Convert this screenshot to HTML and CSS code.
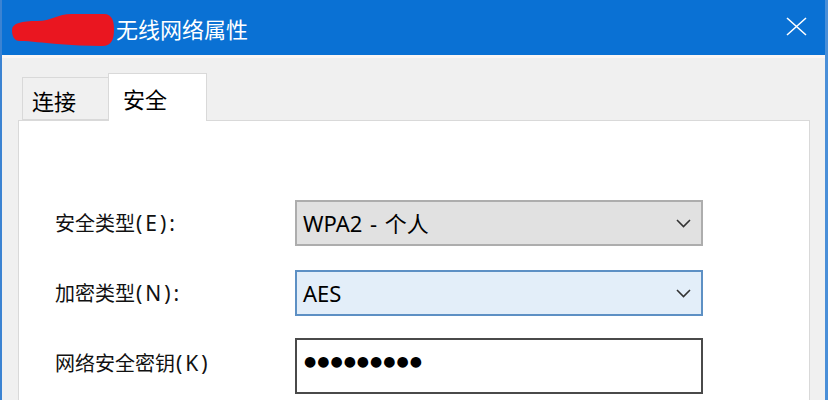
FILE: index.html
```html
<!DOCTYPE html>
<html lang="zh-CN">
<head>
<meta charset="utf-8">
<title>无线网络属性</title>
<link rel="stylesheet" href="styles.css">
</head>
<body>
<div class="window">
  <div class="titlebar">
    <svg class="scribble" width="102" height="36" viewBox="0 0 102 36">
      <path d="M0,19 C0,12 10,10 25,10 C40,10 45,3 60,3 L92,3 C100,3 102,10 102,18 C102,28 100,35 90,35 C75,35 60,34 45,33 C30,32 20,30 8,30 C2,30 0,25 0,19 Z" fill="#ea1620"/>
    </svg>
    <span class="title">无线网络属性</span>
    <svg class="close" width="21" height="19" viewBox="0 0 21 19">
      <path d="M1,1 L20,18 M20,1 L1,18" stroke="#fff" stroke-width="1.6" fill="none"/>
    </svg>
  </div>
  <div class="strip"></div>
  <div class="content">
    <div class="tabs">
      <div class="tab">连接</div>
      <div class="tab active">安全</div>
    </div>
    <div class="panel">
      <div class="row">
        <span class="label">安全类型<span class="lat">(E):</span></span>
        <div class="select">
          <span>WPA2 - 个人</span>
          <svg class="chev" width="15" height="9" viewBox="0 0 15 9"><polyline points="1,1 7.5,7.5 14,1" fill="none" stroke="#333" stroke-width="1.6"/></svg>
        </div>
      </div>
      <div class="row">
        <span class="label">加密类型<span class="lat">(N):</span></span>
        <div class="select focus">
          <span>AES</span>
          <svg class="chev" width="15" height="9" viewBox="0 0 15 9"><polyline points="1,1 7.5,7.5 14,1" fill="none" stroke="#333" stroke-width="1.6"/></svg>
        </div>
      </div>
      <div class="row key">
        <span class="label">网络安全密钥<span class="lat">(K)</span></span>
        <div class="input"><span class="dots">●●●●●●●●●</span></div>
      </div>
    </div>
  </div>
</div>
</body>
</html>
```

FILE: styles.css
```css
* { box-sizing: border-box; }
html, body {
  margin: 0;
  padding: 0;
  width: 828px;
  height: 400px;
  overflow: hidden;
  background: #f0f0f0;
  font-family: "Noto Sans", "Noto Sans CJK SC", sans-serif;
}
.window {
  width: 828px;
  height: 400px;
  border-left: 2px solid #3b83d2;
  border-right: 3px solid #4a8fd8;
  background: #f0f0f0;
  overflow: hidden;
}
.titlebar {
  height: 55px;
  background: #0a71d4;
  display: flex;
  align-items: center;
}
.scribble {
  margin-left: 10px;
  margin-top: 2px;
  flex: none;
}
.title {
  margin-left: 2px;
  color: #fff;
  font-size: 22px;
  font-family: "Noto Sans CJK SC", sans-serif;
  line-height: 1;
}
.close {
  margin-left: auto;
  margin-right: 18px;
  margin-top: -2px;
  flex: none;
}
.strip {
  height: 3px;
  background: #fbf6f4;
}
.content {
  padding-left: 16px;
  padding-right: 15px;
}
.tabs {
  display: flex;
  align-items: flex-end;
  margin-top: 15px;
  padding-left: 4px;
  height: 47px;
  position: relative;
  z-index: 1;
}
.tab {
  width: 86px;
  height: 43px;
  background: #f0f0f0;
  border: 1px solid #d9d9d9;
  border-right: none;
  font-size: 22px;
  font-family: "Noto Sans CJK SC", sans-serif;
  line-height: 1;
  display: flex;
  align-items: center;
  padding-left: 9px;
  padding-top: 2px;
  color: #000;
}
.tab.active {
  width: 99px;
  height: 48px;
  margin-bottom: -1px;
  background: #fff;
  border: 1px solid #d9d9d9;
  border-bottom: none;
  padding-left: 14px;
  padding-top: 0;
}
.panel {
  background: #fff;
  border: 1px solid #d9d9d9;
  height: 300px;
  padding-top: 79px;
  padding-left: 36px;
  display: flex;
  flex-direction: column;
  gap: 24px;
}
.row {
  display: flex;
  align-items: center;
}
.row.key {
  margin-top: -2px;
  align-items: flex-start;
}
.label {
  width: 240px;
  font-size: 20px;
  font-family: "Noto Sans CJK SC", sans-serif;
  color: #111;
  line-height: 1;
}
.lat {
  font-family: "Noto Sans", sans-serif;
  font-size: 21px;
  letter-spacing: 3px;
  margin-left: 1px;
}
.row.key .label {
  margin-top: 15px;
}
.select {
  width: 408px;
  height: 46px;
  background: #e1e1e1;
  border: 2px solid #adadad;
  display: flex;
  align-items: center;
  justify-content: space-between;
  padding: 0 10px 0 6px;
  font-size: 22px;
  word-spacing: 2px;
  color: #000;
}
.select span { line-height: 1; }
.select.focus {
  background: #e3eef9;
  border-color: #5d90c4;
}
.chev { flex: none; margin-top: 1px; }
.input {
  width: 408px;
  height: 56px;
  background: #fff;
  border: 2px solid #4a4a4a;
  padding: 9px 0 0 7px;
}
.dots {
  font-family: "DejaVu Sans", sans-serif;
  font-size: 14px;
  letter-spacing: 1px;
  color: #000;
  line-height: 1;
}
```
